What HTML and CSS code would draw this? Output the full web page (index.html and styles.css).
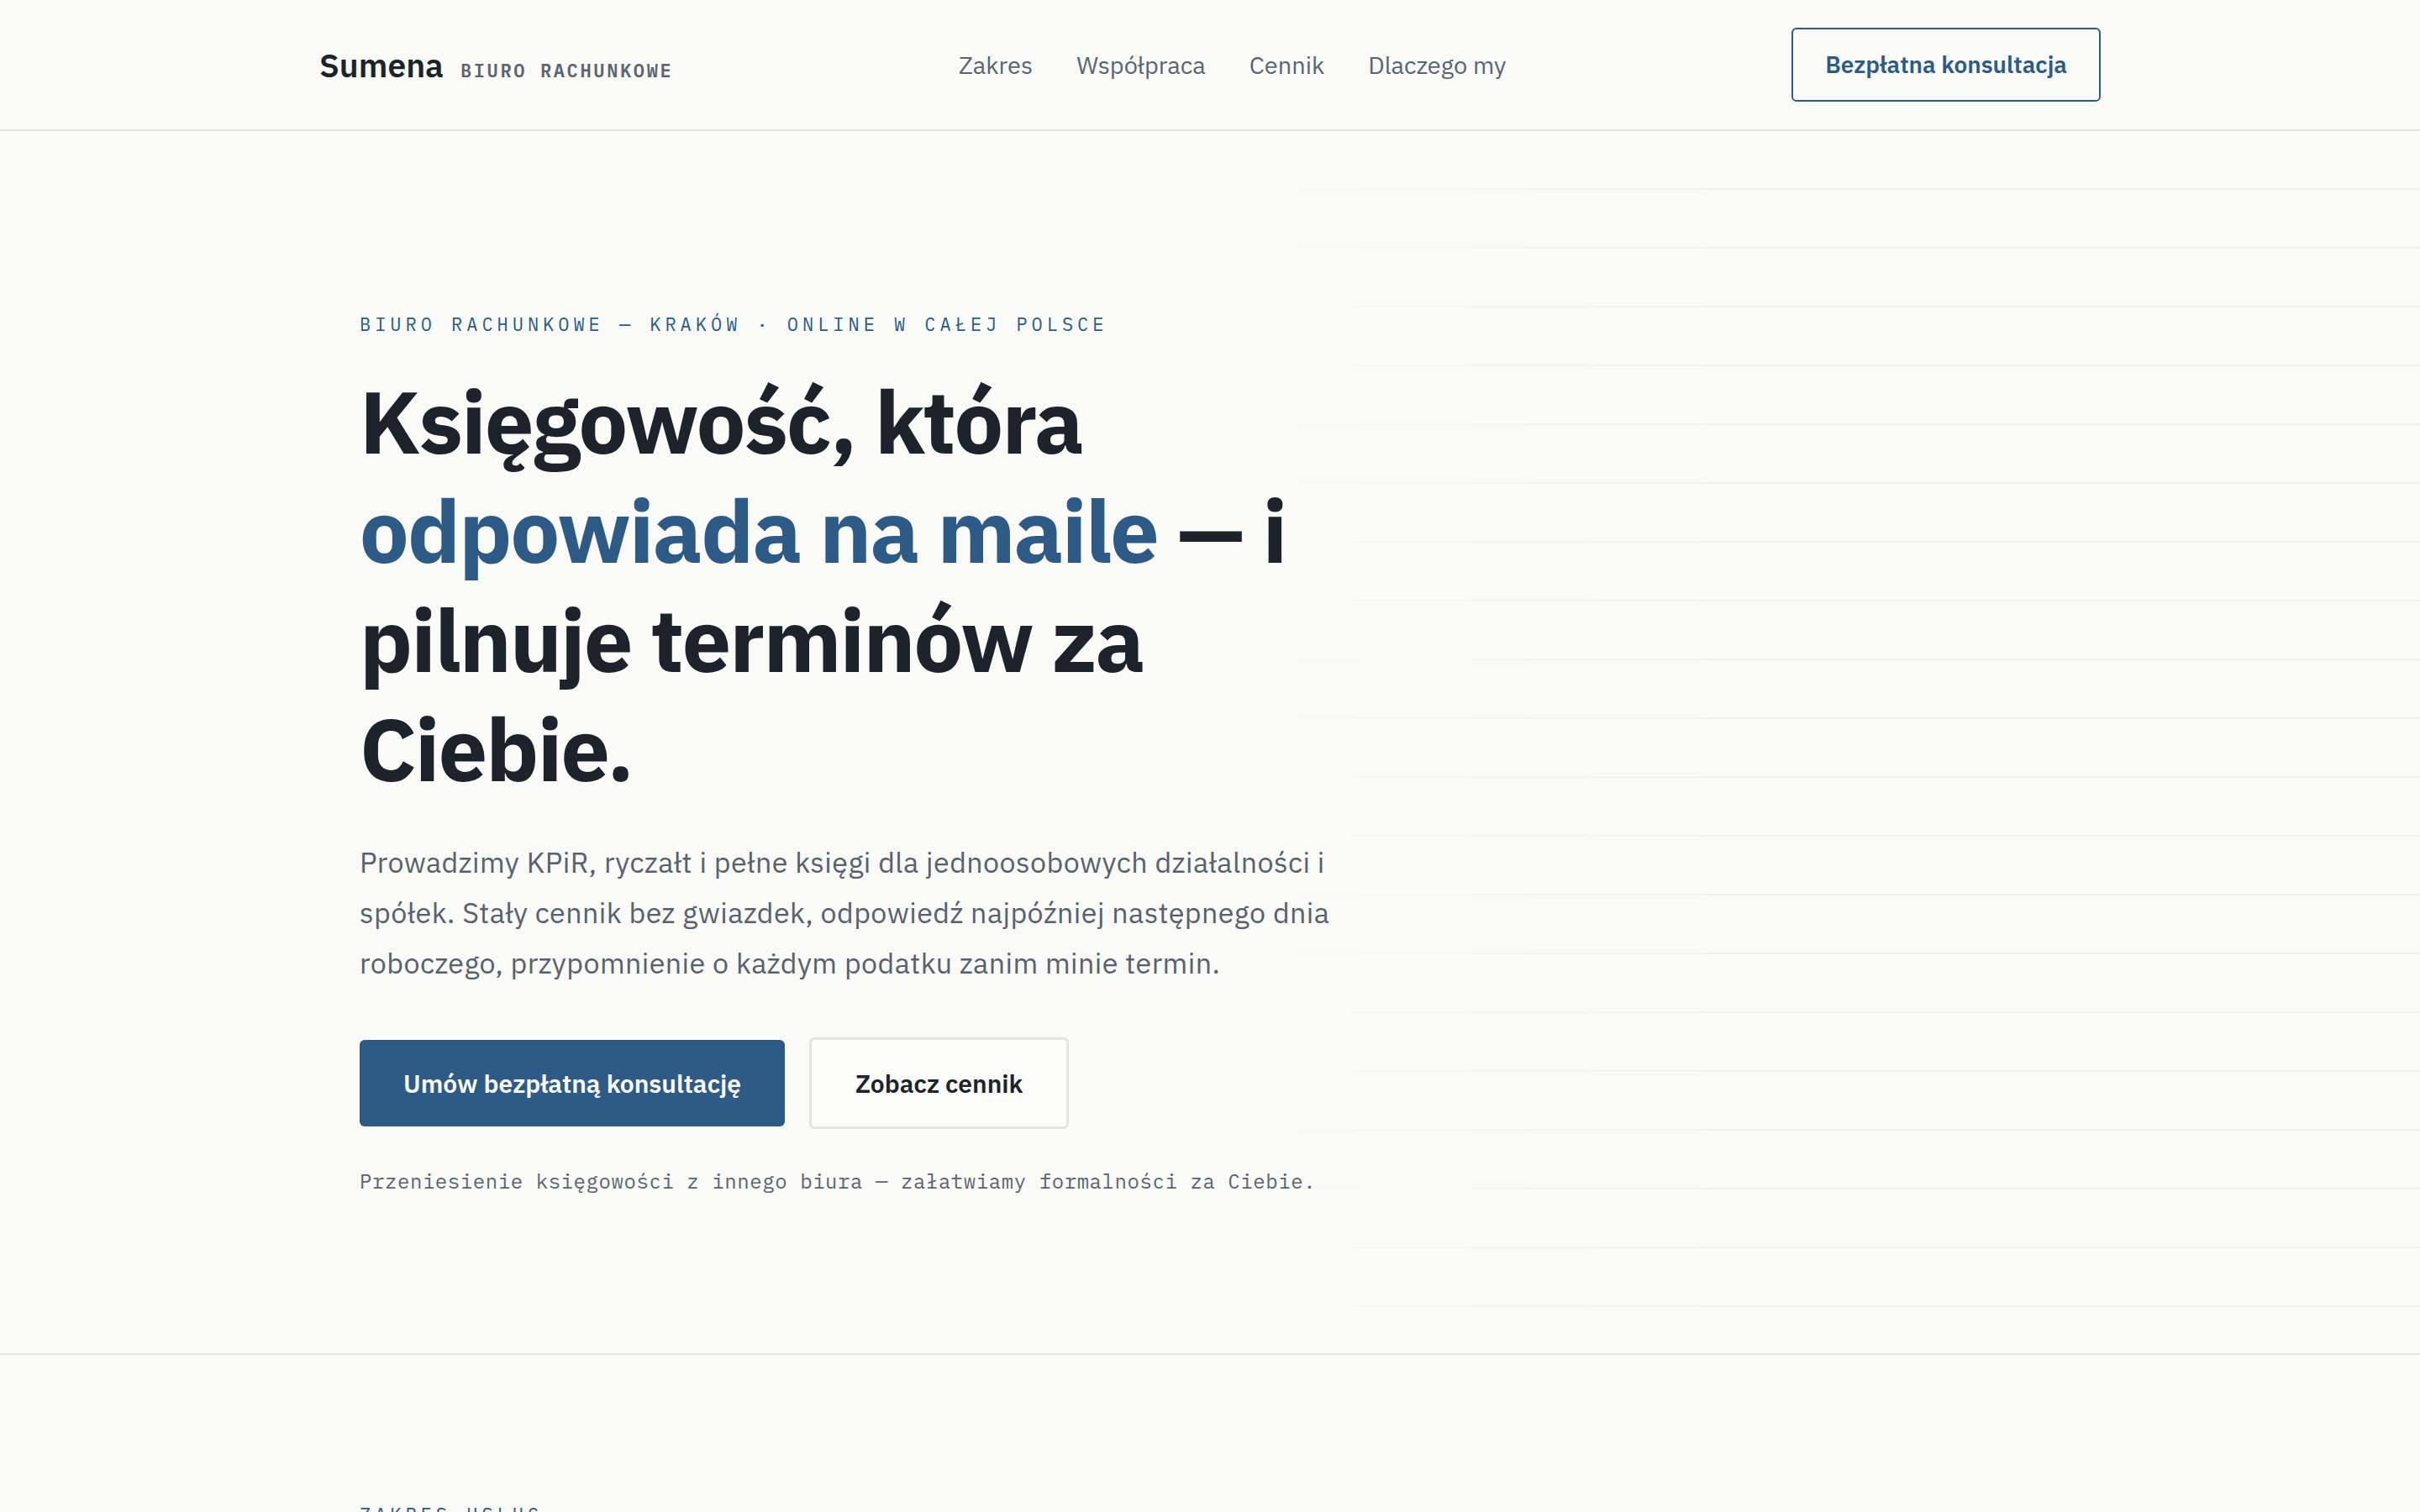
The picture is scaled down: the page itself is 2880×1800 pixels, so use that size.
FILE: index.html
```html
<!DOCTYPE html>
<html lang="pl">
<head>
    <meta charset="UTF-8">
    <meta name="viewport" content="width=device-width, initial-scale=1.0">
    <title>Sumena — biuro rachunkowe Kraków</title>
    <link rel="stylesheet" href="styles.css">
</head>
<body>

<!-- nagłówek -->
<header class="site-header">
    <div class="header-inner">
        <a class="brand" href="#">
            <span class="brand-name">Sumena</span>
            <span class="brand-tag">BIURO RACHUNKOWE</span>
        </a>
        <nav class="main-nav">
            <a href="#zakres">Zakres</a>
            <a href="#wspolpraca">Współpraca</a>
            <a href="#cennik">Cennik</a>
            <a href="#dlaczego">Dlaczego my</a>
        </nav>
        <a class="btn-outline" href="#kontakt">Bezpłatna konsultacja</a>
    </div>
</header>

<!-- hero -->
<section class="hero">
    <div class="hero-inner">
        <div class="hero-text">
            <p class="eyebrow">BIURO RACHUNKOWE — KRAKÓW · ONLINE W CAŁEJ POLSCE</p>
            <h1 class="hero-title">Księgowość, która <span class="accent">odpowiada na maile</span> — i pilnuje terminów za Ciebie.</h1>
            <p class="hero-lead">Prowadzimy KPiR, ryczałt i pełne księgi dla jednoosobowych działalności i spółek. Stały cennik bez gwiazdek, odpowiedź najpóźniej następnego dnia roboczego, przypomnienie o każdym podatku zanim minie termin.</p>
            <div class="hero-actions">
                <a class="btn-primary" href="#kontakt">Umów bezpłatną konsultację</a>
                <a class="btn-secondary" href="#cennik">Zobacz cennik</a>
            </div>
            <p class="hero-note">Przeniesienie księgowości z innego biura — załatwiamy formalności za Ciebie.</p>
        </div>
    </div>
</section>

<!-- zakres usług -->
<section class="services" id="zakres">
    <div class="section-inner">
        <p class="eyebrow">ZAKRES USŁUG</p>
    </div>
</section>

</body>
</html>
```

FILE: styles.css
```css
/* ogólne */
body {
    margin: 0;
    padding: 0;
    background: #fafaf8;
    color: #1d232a;
    font-family: 'IBM Plex Sans', 'Roboto', sans-serif;
}

a {
    text-decoration: none;
    color: inherit;
}

/* nagłówek */
.site-header {
    border-bottom: 2px solid #e4e4e2;
}

.header-inner {
    max-width: 2120px;
    height: 154px;
    margin: 0 auto;
    display: flex;
    align-items: center;
    justify-content: space-between;
}

.brand {
    display: flex;
    align-items: baseline;
    gap: 20px;
}

.brand-name {
    font-size: 39px;
    font-weight: 600;
    color: #1d232a;
}

.brand-tag {
    font-family: 'IBM Plex Mono', 'DejaVu Sans Mono', monospace;
    font-size: 22px;
    font-weight: 600;
    letter-spacing: 0.12em;
    color: #5b6470;
}

.main-nav {
    display: flex;
    gap: 52px;
}

.main-nav a {
    font-size: 29px;
    color: #5b6470;
}

.btn-outline {
    border: 2px solid #2d5a87;
    border-radius: 6px;
    padding: 24px 38px;
    font-size: 28px;
    line-height: 36px;
    font-weight: 600;
    color: #2d5a87;
}

/* hero */
.hero {
    position: relative;
    overflow: hidden;
    border-bottom: 2px solid #e4e4e2;
}

/* linie w tle po prawej */
.hero::before {
    content: "";
    position: absolute;
    inset: 0;
    background: repeating-linear-gradient(to bottom, transparent 0, transparent 68px, rgba(0, 0, 0, 0.04) 68px, rgba(0, 0, 0, 0.04) 70px);
    -webkit-mask-image: linear-gradient(to right, transparent 50%, #000 74%);
    mask-image: linear-gradient(to right, transparent 50%, #000 74%);
}

.hero-inner {
    position: relative;
    max-width: 2120px;
    margin: 0 auto;
    padding: 213px 48px 186px;
    box-sizing: border-box;
}

.hero-text {
    max-width: 1200px;
}

.eyebrow {
    margin: 0 0 34px;
    font-family: 'IBM Plex Mono', 'DejaVu Sans Mono', monospace;
    font-size: 22px;
    line-height: 33px;
    letter-spacing: 0.226em;
    color: #2d5a87;
}

.hero-title {
    margin: 0 0 40px;
    font-size: 104px;
    line-height: 130px;
    font-weight: 700;
    letter-spacing: -0.018em;
    color: #1d232a;
}

.hero-title .accent {
    color: #2d5a87;
}

.hero-lead {
    margin: 0 0 59px;
    font-size: 34px;
    line-height: 60px;
    letter-spacing: 0.013em;
    color: #59616c;
}

.hero-actions {
    display: flex;
    align-items: center;
    gap: 29px;
    margin-bottom: 43px;
}

.btn-primary {
    background-color: #2d5a87;
    color: #fff;
    border-radius: 6px;
    padding: 33px 52px;
    font-size: 30px;
    line-height: 37px;
    font-weight: 600;
}

.btn-secondary {
    background-color: #fdfdfc;
    color: #1d232a;
    border: 3px solid #e4e4e2;
    border-radius: 6px;
    padding: 33px 52px;
    font-size: 30px;
    line-height: 37px;
    font-weight: 600;
}

.hero-note {
    margin: 0;
    font-family: 'IBM Plex Mono', 'DejaVu Sans Mono', monospace;
    font-size: 24px;
    line-height: 38px;
    letter-spacing: 0.024em;
    color: #5b6470;
}

/* zakres usług */
.section-inner {
    max-width: 2120px;
    margin: 0 auto;
    padding: 173px 48px 200px;
    box-sizing: border-box;
}
```
